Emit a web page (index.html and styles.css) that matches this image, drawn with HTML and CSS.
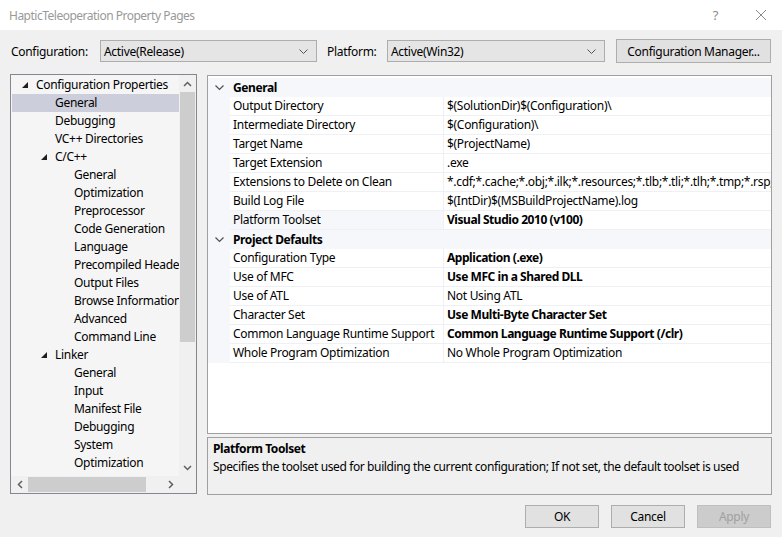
FILE: index.html
```html
<!DOCTYPE html>
<html>
<head>
<meta charset="utf-8">
<link rel="stylesheet" href="styles.css">
</head>
<body>
<div class="window">
  <div class="titlebar">
    <span class="title">HapticTeleoperation Property Pages</span>
    <span class="help">?</span>
    <svg class="close" width="12" height="12" viewBox="0 0 12 12"><path d="M1 1L11 11M11 1L1 11" stroke="#8a8a8a" stroke-width="1" fill="none"/></svg>
  </div>
  <div class="content">
    <div class="toolbar">
      <span class="lbl lbl-config">Configuration:</span>
      <div class="combo combo-config"><span>Active(Release)</span><svg width="9" height="5" viewBox="0 0 9 5"><path d="M0.5 0.5L4.5 4.5L8.5 0.5" stroke="#555" fill="none"/></svg></div>
      <span class="lbl lbl-platform">Platform:</span>
      <div class="combo combo-platform"><span>Active(Win32)</span><svg width="9" height="5" viewBox="0 0 9 5"><path d="M0.5 0.5L4.5 4.5L8.5 0.5" stroke="#555" fill="none"/></svg></div>
      <div class="btn btn-cm">Configuration Manager...</div>
    </div>
    <div class="main">
      <div class="tree">
        <div class="tree-items">
          <div class="ti l0"><svg class="tri" width="6" height="6" viewBox="0 0 6 6"><path d="M6 0L6 6L0 6Z" fill="#1e1e1e"/></svg>Configuration Properties</div>
          <div class="ti l1 sel">General</div>
          <div class="ti l1">Debugging</div>
          <div class="ti l1">VC++ Directories</div>
          <div class="ti l1 exp"><svg class="tri" width="6" height="6" viewBox="0 0 6 6"><path d="M6 0L6 6L0 6Z" fill="#1e1e1e"/></svg>C/C++</div>
          <div class="ti l2">General</div>
          <div class="ti l2">Optimization</div>
          <div class="ti l2">Preprocessor</div>
          <div class="ti l2">Code Generation</div>
          <div class="ti l2">Language</div>
          <div class="ti l2">Precompiled Headers</div>
          <div class="ti l2">Output Files</div>
          <div class="ti l2">Browse Information</div>
          <div class="ti l2">Advanced</div>
          <div class="ti l2">Command Line</div>
          <div class="ti l1 exp"><svg class="tri" width="6" height="6" viewBox="0 0 6 6"><path d="M6 0L6 6L0 6Z" fill="#1e1e1e"/></svg>Linker</div>
          <div class="ti l2">General</div>
          <div class="ti l2">Input</div>
          <div class="ti l2">Manifest File</div>
          <div class="ti l2">Debugging</div>
          <div class="ti l2">System</div>
          <div class="ti l2">Optimization</div>
        </div>
        <div class="vscroll">
          <div class="sb-arrow"><svg width="9" height="6" viewBox="0 0 9 6"><path d="M1 5L4.5 1.5L8 5" stroke="#606060" stroke-width="1.5" fill="none"/></svg></div>
          <div class="vtrack"><div class="vthumb"></div></div>
          <div class="sb-arrow"><svg width="9" height="6" viewBox="0 0 9 6"><path d="M1 1L4.5 4.5L8 1" stroke="#606060" stroke-width="1.5" fill="none"/></svg></div>
        </div>
        <div class="hscroll">
          <div class="sb-arrow h"><svg width="6" height="9" viewBox="0 0 6 9"><path d="M5 1L1.5 4.5L5 8" stroke="#606060" stroke-width="1.5" fill="none"/></svg></div>
          <div class="htrack"><div class="hthumb"></div></div>
          <div class="sb-arrow h"><svg width="6" height="9" viewBox="0 0 6 9"><path d="M1 1L4.5 4.5L1 8" stroke="#606060" stroke-width="1.5" fill="none"/></svg></div>
        </div>
        <div class="corner"></div>
      </div>
      <div class="right">
        <div class="grid">
          <div class="cat"><span class="chev"><svg width="9" height="6" viewBox="0 0 9 6"><path d="M0.5 0.5L4.5 4.5L8.5 0.5" stroke="#505050" stroke-width="1.2" fill="none"/></svg></span><span class="catname">General</span></div>
          <div class="row"><span class="gut"></span><span class="name">Output Directory</span><span class="val">$(SolutionDir)$(Configuration)\</span></div>
          <div class="row"><span class="gut"></span><span class="name">Intermediate Directory</span><span class="val">$(Configuration)\</span></div>
          <div class="row"><span class="gut"></span><span class="name">Target Name</span><span class="val">$(ProjectName)</span></div>
          <div class="row"><span class="gut"></span><span class="name">Target Extension</span><span class="val">.exe</span></div>
          <div class="row"><span class="gut"></span><span class="name">Extensions to Delete on Clean</span><span class="val">*.cdf;*.cache;*.obj;*.ilk;*.resources;*.tlb;*.tli;*.tlh;*.tmp;*.rsp;*.pgc;*.pgd;*.meta;*.tlog;*.manifest;*.res;*.pch;*.exp;*.idb;*.rep;*.xdc;*.pdb;*_manifest.rc;*.bsc;*.sbr;*.xml;*.metagen;*.bi</span></div>
          <div class="row"><span class="gut"></span><span class="name">Build Log File</span><span class="val">$(IntDir)$(MSBuildProjectName).log</span></div>
          <div class="row selrow"><span class="gut"></span><span class="name">Platform Toolset</span><span class="val b">Visual Studio 2010 (v100)</span></div>
          <div class="cat"><span class="chev"><svg width="9" height="6" viewBox="0 0 9 6"><path d="M0.5 0.5L4.5 4.5L8.5 0.5" stroke="#505050" stroke-width="1.2" fill="none"/></svg></span><span class="catname">Project Defaults</span></div>
          <div class="row"><span class="gut"></span><span class="name">Configuration Type</span><span class="val b">Application (.exe)</span></div>
          <div class="row"><span class="gut"></span><span class="name">Use of MFC</span><span class="val b">Use MFC in a Shared DLL</span></div>
          <div class="row"><span class="gut"></span><span class="name">Use of ATL</span><span class="val">Not Using ATL</span></div>
          <div class="row"><span class="gut"></span><span class="name">Character Set</span><span class="val b">Use Multi-Byte Character Set</span></div>
          <div class="row"><span class="gut"></span><span class="name">Common Language Runtime Support</span><span class="val b">Common Language Runtime Support (/clr)</span></div>
          <div class="row"><span class="gut"></span><span class="name">Whole Program Optimization</span><span class="val">No Whole Program Optimization</span></div>
        </div>
        <div class="desc">
          <div class="desc-title">Platform Toolset</div>
          <div class="desc-text">Specifies the toolset used for building the current configuration; If not set, the default toolset is used</div>
        </div>
      </div>
    </div>
    <div class="buttons">
      <div class="btn dlg">OK</div>
      <div class="btn dlg">Cancel</div>
      <div class="btn dlg disabled">Apply</div>
    </div>
  </div>
</div>
</body>
</html>
```
FILE: styles.css
```css
* { box-sizing: border-box; }
html, body { margin: 0; padding: 0; }
body {
  width: 782px;
  height: 537px;
  overflow: hidden;
  font-family: "Noto Sans", "Open Sans", sans-serif;
  font-size: 12px;
  letter-spacing: -0.3px;
  color: #000;
  background: #f0f0f0;
}
.window { width: 782px; height: 537px; display: flex; flex-direction: column; }
.titlebar {
  height: 30px;
  background: #fff;
  display: flex;
  align-items: center;
  padding-left: 9px;
  color: #999;
}
.title { font-size: 12px; letter-spacing: -0.5px; flex: 1; }
.help { font-size: 13px; color: #8a8a8a; margin-right: 37px; }
.close { margin-right: 15px; }
.content { flex: 1; display: flex; flex-direction: column; }
.toolbar {
  display: flex;
  align-items: center;
  height: 24px;
  margin-top: 9px;
}
.lbl { white-space: nowrap; flex: none; }
.lbl-config { margin-left: 11px; width: 89px; }
.lbl-platform { margin-left: 10px; width: 60px; }
.combo {
  flex: none;
  height: 22px;
  border: 1px solid #adadad;
  background: #e5e5e5;
  display: flex;
  align-items: center;
  justify-content: space-between;
  padding: 0 8px 0 3px;
}
.combo-config { width: 217px; }
.combo-platform { width: 218px; }
.btn {
  flex: none;
  border: 1px solid #adadad;
  background: #e1e1e1;
  display: flex;
  align-items: center;
  justify-content: center;
}
.btn-cm { width: 155px; height: 24px; margin-left: 11px; }
.main {
  display: flex;
  height: 421px;
  margin-top: 11px;
  padding-left: 10px;
  gap: 10px;
}
.tree {
  flex: none;
  width: 187px;
  height: 420px;
  border: 1px solid #828790;
  background: #f5f5f5;
  display: grid;
  grid-template-columns: minmax(0, 1fr) 17px;
  grid-template-rows: minmax(0, 1fr) 17px;
}
.tree-items { overflow: hidden; padding-top: 1px; min-width: 0; }
.ti {
  height: 18px;
  line-height: 18px;
  white-space: nowrap;
  position: relative;
}
.ti.l0 { padding-left: 25px; }
.ti.l1 { padding-left: 44px; }
.ti.l2 { padding-left: 63px; }
.ti.sel { background: #cccedb; margin-left: 1px; padding-left: 43px; }
.tri { position: absolute; top: 6px; }
.l0 .tri { left: 11px; }
.l1 .tri { left: 30px; }
.vscroll { display: flex; flex-direction: column; background: #f0f0f0; }
.sb-arrow { height: 17px; display: flex; align-items: center; justify-content: center; flex: none; }
.sb-arrow.h { width: 17px; height: 17px; }
.vtrack { flex: 1; padding: 0 1px; }
.vthumb { height: 250px; background: #cdcdcd; }
.hscroll { display: flex; background: #f0f0f0; }
.htrack { flex: 1; padding: 1px 0; }
.hthumb { width: 118px; height: 100%; background: #cdcdcd; }
.corner { background: #f0f0f0; }
.right { flex: 1; min-width: 0; display: flex; flex-direction: column; margin-right: 10px; }
.grid {
  height: 359px;
  margin-top: 1px;
  padding-top: 2px;
  border: 1px solid #a0a0a0;
  background: #fff;
  overflow: hidden;
}
.cat {
  height: 19px;
  display: flex;
  align-items: center;
  background: #f5f7fb;
  font-weight: bold;
  letter-spacing: -0.4px;
}
.chev { width: 22px; display: flex; justify-content: center; flex: none; }
.catname { padding-left: 3px; }
.row { display: flex; height: 19px; }
.gut { width: 22px; background: #f5f7fb; flex: none; }
.name, .val {
  line-height: 18px;
  border-bottom: 1px solid #eef0f4;
  white-space: nowrap;
  overflow: hidden;
}
.name { width: 214px; flex: none; padding-left: 3px; border-right: 1px solid #eef0f4; }
.val { flex: 1; min-width: 0; padding-left: 3px; }
.val.b { font-weight: bold; letter-spacing: -0.45px; }
.selrow .name { background: #f5f7fb; }
.desc {
  margin-top: 3px;
  height: 58px;
  border: 1px solid #a0a0a0;
  padding: 2px 5px;
  line-height: 18px;
  overflow: hidden;
}
.desc-title { font-weight: bold; letter-spacing: -0.4px; }
.desc-text { letter-spacing: -0.38px; white-space: nowrap; }
.buttons {
  display: flex;
  justify-content: flex-end;
  gap: 12px;
  margin-top: 10px;
  padding-right: 11px;
}
.btn.dlg { width: 74px; height: 23px; }
.btn.disabled { background: #cccccc; border-color: #bfbfbf; color: #a0a0a0; }
```
